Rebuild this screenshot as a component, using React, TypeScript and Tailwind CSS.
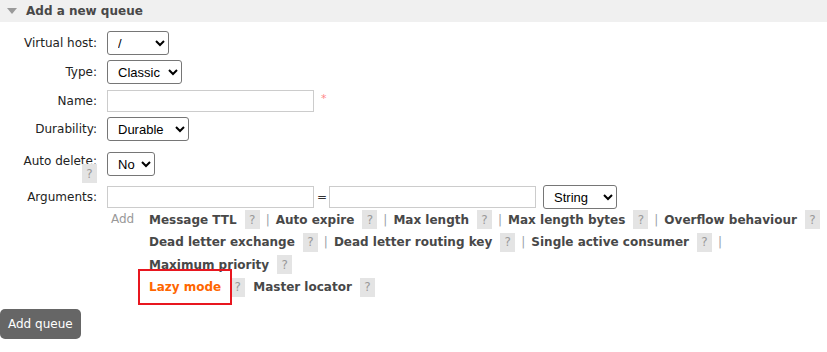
import React from "react";

function Help() {
    return (
        <span className="inline-flex w-[15px] h-[19px] bg-[#e4e4e4] text-[#999] items-center justify-center text-[12px] leading-none">?</span>
    )
}

function Pipe() {
    return <span className="mx-[6px] text-[#9a9fa8]">|</span>
}

function Arg({ label, pipe = true }: { label: string; pipe?: boolean }) {
    return (
        <>
            <span className="font-bold text-[#484848]">{label}</span>
            <span className="ml-[8px]"><Help /></span>
            {pipe && <Pipe />}
        </>
    )
}

const selectCls = "h-[24px] border border-[#767676] rounded-[3px] bg-white text-[13px] pl-[6px] text-black font-['Liberation_Sans',Arial,sans-serif]";
const inputCls = "h-[22px] w-[207px] border border-[#cccccc] bg-white";

export default function App() {
    return (
        <div className="w-[827px] h-[352px] bg-white font-['DejaVu_Sans',Verdana,sans-serif] text-[12px] text-[#222]">

            {/* header */}
            <div className="h-[22px] bg-[#f0f0f0] flex items-center">
                <svg width="10" height="6" viewBox="0 0 10 6" className="ml-[7px]">
                    <polygon points="0,0 10,0 5,6" fill="#9a9a9a" />
                </svg>
                <span className="ml-[9px] font-bold text-[#484848]">Add a new queue</span>
            </div>

            <div className="pt-[9px]">
                <div className="flex items-center">
                    <label className="w-[97px] text-right">Virtual host:</label>
                    <select className={`${selectCls} ml-[10px] w-[62px]`}><option>/</option></select>
                </div>

                <div className="flex items-center mt-[5px]">
                    <label className="w-[97px] text-right">Type:</label>
                    <select className={`${selectCls} ml-[10px] w-[75px]`}><option>Classic</option></select>
                </div>

                <div className="flex items-center mt-[6px]">
                    <label className="w-[97px] text-right">Name:</label>
                    <input className={`${inputCls} ml-[10px]`} />
                    <span className="ml-[7px] text-[#f88] text-[11px] -mt-[3px]">*</span>
                </div>

                <div className="flex items-center mt-[5px]">
                    <label className="w-[97px] text-right">Durability:</label>
                    <select className={`${selectCls} ml-[10px] w-[82px]`}><option>Durable</option></select>
                </div>

                <div className="flex items-start mt-[11px]">
                    <div className="w-[97px] flex flex-col items-end">
                        <label className="leading-[16px] pt-[1px] w-full text-right">Auto delete:</label>
                        <span className="-mt-[5px]"><Help /></span>
                    </div>
                    <select className={`${selectCls} ml-[10px] w-[48px]`}><option>No</option></select>
                </div>

                <div className="flex items-center mt-[2px]">
                    <label className="w-[97px] text-right">Arguments:</label>
                    <input className={`${inputCls} ml-[10px]`} />
                    <span className="ml-[3px] mr-[2px] text-[#333]">=</span>
                    <input className={inputCls} />
                    <select className={`${selectCls} ml-[7px] w-[74px]`}><option>String</option></select>
                </div>

                <div className="flex -mt-[1px]">
                    <span className="ml-[111px] w-[38px] h-[22px] flex items-center text-[#999]">Add</span>
                    <div className="flex flex-col">
                        <div className="flex items-center h-[23px]">
                            <Arg label="Message TTL" />
                            <Arg label="Auto expire" />
                            <Arg label="Max length" />
                            <Arg label="Max length bytes" />
                            <Arg label="Overflow behaviour" pipe={false} />
                        </div>
                        <div className="flex items-center h-[22px]">
                            <Arg label="Dead letter exchange" />
                            <Arg label="Dead letter routing key" />
                            <Arg label="Single active consumer" />
                        </div>
                        <div className="flex items-center h-[23px]">
                            <Arg label="Maximum priority" pipe={false} />
                        </div>
                        <div className="flex items-center h-[22px]">
                            <span className="relative font-bold text-[#ff6600]">
                                Lazy mode
                                <span className="absolute left-[-11px] right-[-11px] top-[-9px] bottom-[-9px] border-2 border-[#e8161f] z-10"></span>
                            </span>
                            <span className="ml-[9px]"><Help /></span>
                            <span className="ml-[8px] font-bold text-[#484848]">Master locator</span>
                            <span className="ml-[8px]"><Help /></span>
                        </div>
                    </div>
                </div>

                <button className="mt-[11px] h-[30px] px-[8px] bg-[#666] rounded-[5px] text-white text-[12px]">Add queue</button>
            </div>
        </div>
    )
}
